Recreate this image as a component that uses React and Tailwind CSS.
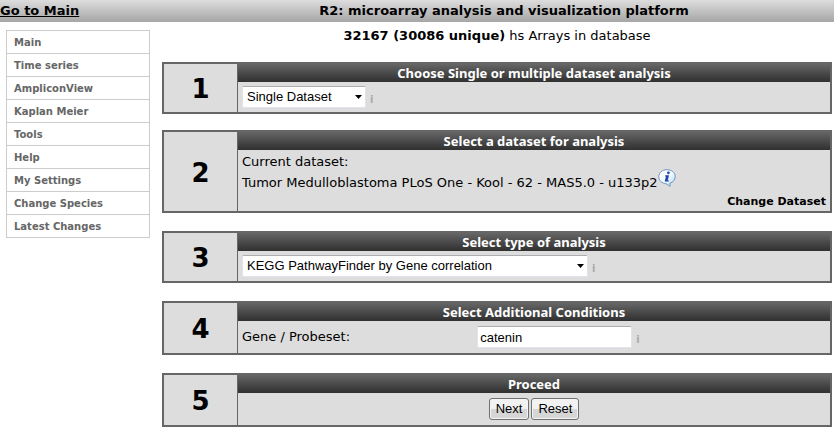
const MENU = [
  'Main',
  'Time series',
  'AmpliconView',
  'Kaplan Meier',
  'Tools',
  'Help',
  'My Settings',
  'Change Species',
  'Latest Changes',
];

function Hint({ text }) {
  return (
    <span title={text} className="ml-1 pt-1.5 text-[10px] leading-3 font-bold text-[#aaa]">
      i
    </span>
  );
}

function Select({ label, value, className }) {
  return (
    <div className={`relative ${className}`}>
      <select
        aria-label={label}
        defaultValue={value}
        className="block h-[22px] w-full appearance-none rounded-xs border border-[#e2e3ea] border-t-[#abadb3] bg-white pr-4 pl-1 font-['Liberation_Sans',Arial,sans-serif] text-[13px] leading-5 text-black"
      >
        <option>{value}</option>
      </select>
      <svg viewBox="0 0 7 4" className="pointer-events-none absolute top-[9px] right-1 h-1 w-[7px]">
        <path d="M0 0h7L3.5 4z" fill="#000" />
      </svg>
    </div>
  );
}

function Button({ children, type }) {
  return (
    <button
      type={type}
      className="h-[22px] rounded-[3px] border border-[#707070] bg-linear-to-b from-[#f2f2f2] from-50% to-[#d6d6d6] to-50% px-1.5 font-['Liberation_Sans',Arial,sans-serif] text-[13px] leading-5 text-black inset-ring inset-ring-[#f4f4f4]"
    >
      {children}
    </button>
  );
}

function InfoIcon() {
  return (
    <svg viewBox="0 0 18 18" className="-mt-2.5 size-[18px] shrink-0" role="img" aria-label="Dataset information">
      <defs>
        <linearGradient id="bubble" x1="0" y1="0" x2="1" y2="1">
          <stop offset="0" stopColor="#ffffff" />
          <stop offset="0.5" stopColor="#f4faff" />
          <stop offset="1" stopColor="#a9d4f5" />
        </linearGradient>
      </defs>
      <path
        d="M9 .7C4.300.7.8 3.700.8 7.600c0 3.700 3.200 6.800 7.400 7.200 1.200.5 2.200 1.400 3.700 2.600.3-1 .2-2 0-3.100 3.200-1 5.300-3.600 5.300-6.700C17.200 3.700 13.700.7 9 .7z"
        fill="url(#bubble)"
        stroke="#6d96bd"
        strokeWidth="1"
      />
      <circle cx="10.400" cy="3.800" r="1.400" fill="#1846a8" />
      <path d="M7.300 6.300h3.700l-1.300 5.100h1.400l-.3 1.200H6.700L8 7.500H7z" fill="#1846a8" />
    </svg>
  );
}

function Step({ number, title, children }) {
  return (
    <section className="flex border-2 border-[#666] bg-[#ddd]">
      <div className="flex w-[74px] shrink-0 items-center justify-center border-r border-[#666] pt-0.5 text-[26px] leading-8 font-bold">
        {number}
      </div>
      <div className="min-w-0 flex-1">
        <h2 className="h-[18px] bg-linear-to-b from-[#666] to-[#303030] text-center font-['Noto_Sans',sans-serif] text-[13px] leading-[18px] font-bold text-white">
          {title}
        </h2>
        {children}
      </div>
    </section>
  );
}

export default function App() {
  return (
    <div className="bg-white font-[Verdana,'DejaVu_Sans',sans-serif] text-[13px] leading-4 text-black">
      <header className="flex h-[22px] items-center bg-linear-to-b from-[#ddd] to-[#a6a6a6] font-bold">
        <a href="#main" className="w-[174px] shrink-0 underline">
          Go to Main
        </a>
        <h1 className="flex-1 text-center">R2: microarray analysis and visualization platform</h1>
      </header>

      <div className="flex items-start gap-3 pr-0.5 pl-1.5">
        <nav className="mt-2 w-36 shrink-0 border border-b-0 border-[#ccc]">
          {MENU.map((item) => (
            <a
              key={item}
              href="#menu"
              className="block border-b border-[#ccc] pt-0.5 pl-[7px] text-[10px] leading-5 font-bold text-[#666]"
            >
              {item}
            </a>
          ))}
        </nav>

        <main className="min-w-0 flex-1 pt-1.5">
          <p className="mb-[18px] text-center">
            <b>32167 (30086 unique)</b> hs Arrays in database
          </p>
          <form className="flex flex-col gap-[18px]" onSubmit={(e) => e.preventDefault()}>
            <div className="flex flex-col gap-4">
              <Step number="1" title="Choose Single or multiple dataset analysis">
                <div className="flex h-[30px] items-center pl-1">
                  <Select label="Dataset mode" value="Single Dataset" className="w-[124px]" />
                  <Hint text="Dataset mode" />
                </div>
              </Step>

              <Step number="2" title="Select a dataset for analysis">
                <div className="px-1 pt-1">
                  <div>Current dataset:</div>
                  <div className="flex h-[26px] items-center">
                    Tumor Medulloblastoma PLoS One - Kool - 62 - MAS5.0 - u133p2
                    <InfoIcon />
                  </div>
                  <div className="pb-[3px] text-right text-[11px] leading-3 font-bold">
                    <a href="#dataset">Change Dataset</a>
                  </div>
                </div>
              </Step>
            </div>

            <Step number="3" title="Select type of analysis">
              <div className="flex h-[30px] items-center pl-1">
                <Select
                  label="Type of analysis"
                  value="KEGG PathwayFinder by Gene correlation"
                  className="w-[346px]"
                />
                <Hint text="Type of analysis" />
              </div>
            </Step>

            <Step number="4" title="Select Additional Conditions">
              <div className="flex h-8 items-center pl-1">
                <label htmlFor="gene" className="w-2/5">
                  Gene / Probeset:
                </label>
                <input
                  id="gene"
                  type="text"
                  defaultValue="catenin"
                  className="h-[22px] w-[155px] rounded-xs border border-[#e2e3ea] border-t-[#abadb3] bg-white px-0.5 font-['Liberation_Sans',Arial,sans-serif] text-[13px] leading-5"
                />
                <Hint text="Gene or probeset" />
              </div>
            </Step>

            <Step number="5" title="Proceed">
              <div className="flex h-8 items-center justify-center gap-0.5">
                <Button type="submit">Next</Button>
                <Button type="reset">Reset</Button>
              </div>
            </Step>
          </form>
        </main>
      </div>
    </div>
  );
}
